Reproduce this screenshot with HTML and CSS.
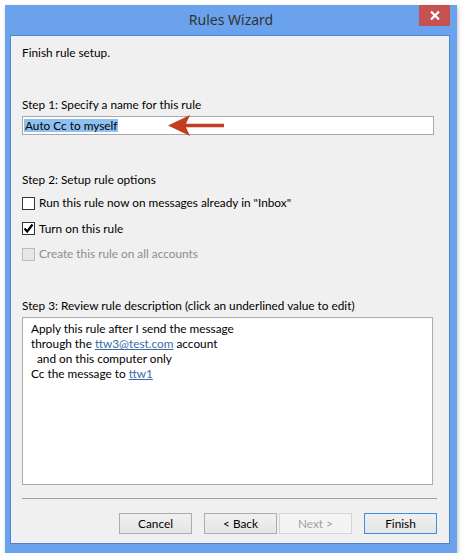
FILE: index.html
```html
<!DOCTYPE html>
<html>
<head>
<meta charset="utf-8">
<link rel="stylesheet" href="styles.css">
</head>
<body>
<div class="window">
  <div class="titlebar">
    <div class="title">Rules Wizard</div>
    <div class="close">
      <svg width="10" height="9" viewBox="0 0 10 9"><path d="M1 0.5 L9 8.5 M9 0.5 L1 8.5" stroke="#fff" stroke-width="2.2"/></svg>
    </div>
  </div>
  <div class="client">
    <div class="line intro">Finish rule setup.</div>
    <div class="line step1">Step 1: Specify a name for this rule</div>
    <div class="namebox">
      <span class="sel">Auto Cc to myself</span>
      <svg class="arrow" width="57" height="23" viewBox="0 0 57 23"><path d="M0 11.5 L22 1 L18 9.8 L56 9.8 L56 13.2 L18 13.2 L22 22 Z" fill="#c23e1e"/></svg>
    </div>
    <div class="line step2">Step 2: Setup rule options</div>
    <div class="options">
      <div class="opt"><span class="cb"></span><span>Run this rule now on messages already in "Inbox"</span></div>
      <div class="opt"><span class="cb"><svg width="11" height="11" viewBox="0 0 11 11"><path d="M1.5 5.5 L4.2 8.5 L9.5 1.5" stroke="#000" stroke-width="2.2" fill="none"/></svg></span><span>Turn on this rule</span></div>
      <div class="opt disabled"><span class="cb"></span><span>Create this rule on all accounts</span></div>
    </div>
    <div class="line step3">Step 3: Review rule description (click an underlined value to edit)</div>
    <div class="desc">
      <div>Apply this rule after I send the message</div>
      <div>through the <a class="lnk">ttw3@test.com</a> account</div>
      <div class="indent">and on this computer only</div>
      <div>Cc the message to <a class="lnk">ttw1</a></div>
    </div>
    <div class="sep"></div>
    <div class="buttons">
      <div class="btn">Cancel</div>
      <div class="btn back">&lt; Back</div>
      <div class="btn disabled">Next &gt;</div>
      <div class="btn default">Finish</div>
    </div>
  </div>
</div>
</body>
</html>
```

FILE: styles.css
```css
html, body {
  margin: 0;
  padding: 0;
  background: #ffffff;
}
body {
  font-family: Lato, "Noto Sans", sans-serif;
  font-size: 11.8px;
  color: #000;
}
.window {
  margin: 5px 0 0 5px;
  width: 452px;
  height: 548px;
  background: #6aa2ee;
  box-shadow: 1px 2px 4px rgba(0,0,0,0.25);
  display: flex;
  flex-direction: column;
}
.titlebar {
  height: 30px;
  position: relative;
  display: flex;
  justify-content: center;
}
.title {
  font-family: "Noto Sans", "Open Sans", sans-serif;
  font-size: 14px;
  color: #333;
  line-height: 30px;
}
.close {
  position: absolute;
  top: 0;
  right: 7px;
  width: 31px;
  height: 21px;
  background: #c75050;
  display: flex;
  align-items: center;
  justify-content: center;
}
.client {
  margin: 0 7px 9px 5px;
  border: 1px solid #4f84cc;
  background: #f0f0f0;
  flex: 1;
  padding: 9px 10px 0 11px;
  display: flex;
  flex-direction: column;
}
.line {
  line-height: 16px;
  height: 16px;
  white-space: nowrap;
}
.step1 { margin-top: 36px; }
.namebox {
  margin-top: 3px;
  width: 409px;
  height: 17px;
  border: 1px solid #a9a9a9;
  background: #fff;
  display: flex;
  align-items: center;
  padding-left: 1px;
}
.sel {
  background: #8ec0f0;
  line-height: 13px;
  height: 13px;
  padding: 0 1px;
}
.arrow {
  margin-left: 50px;
}
.step2 { margin-top: 37px; }
.options {
  margin-top: 7px;
  display: flex;
  flex-direction: column;
  gap: 9.5px;
}
.opt {
  display: flex;
  align-items: center;
  height: 16px;
  line-height: 16px;
  white-space: nowrap;
  gap: 4px;
}
.cb {
  width: 11px;
  height: 11px;
  border: 1px solid #333;
  background: #fff;
  display: flex;
  align-items: center;
  justify-content: center;
}
.opt.disabled { color: #8d8d8d; }
.opt.disabled .cb {
  border-color: #bcbcbc;
  background: #e6e6e6;
}
.step3 { margin-top: 36px; }
.desc {
  margin-top: 3px;
  width: 401px;
  height: 155px;
  border: 1px solid #ababab;
  background: #fff;
  padding: 3px 0 8px 8px;
  line-height: 15px;
}
.indent { padding-left: 6px; }
.lnk {
  color: #3a6aa8;
  text-decoration: underline;
}
.sep {
  margin-top: 13px;
  width: 415px;
  height: 1px;
  background: #a0a0a0;
}
.buttons {
  margin-top: 14px;
  width: 415px;
  display: flex;
  justify-content: flex-end;
  gap: 12px;
}
.btn {
  width: 71px;
  height: 19px;
  border: 1px solid #acacac;
  background: linear-gradient(#f0f0f0, #e5e5e5);
  text-align: center;
  line-height: 19px;
}
.btn.back { margin-right: -10px; }
.btn.disabled {
  color: #a0a0a0;
  border-color: #d5d5d5;
  background: #f4f4f4;
}
.btn.default {
  border-color: #3c8ee8;
}
```
